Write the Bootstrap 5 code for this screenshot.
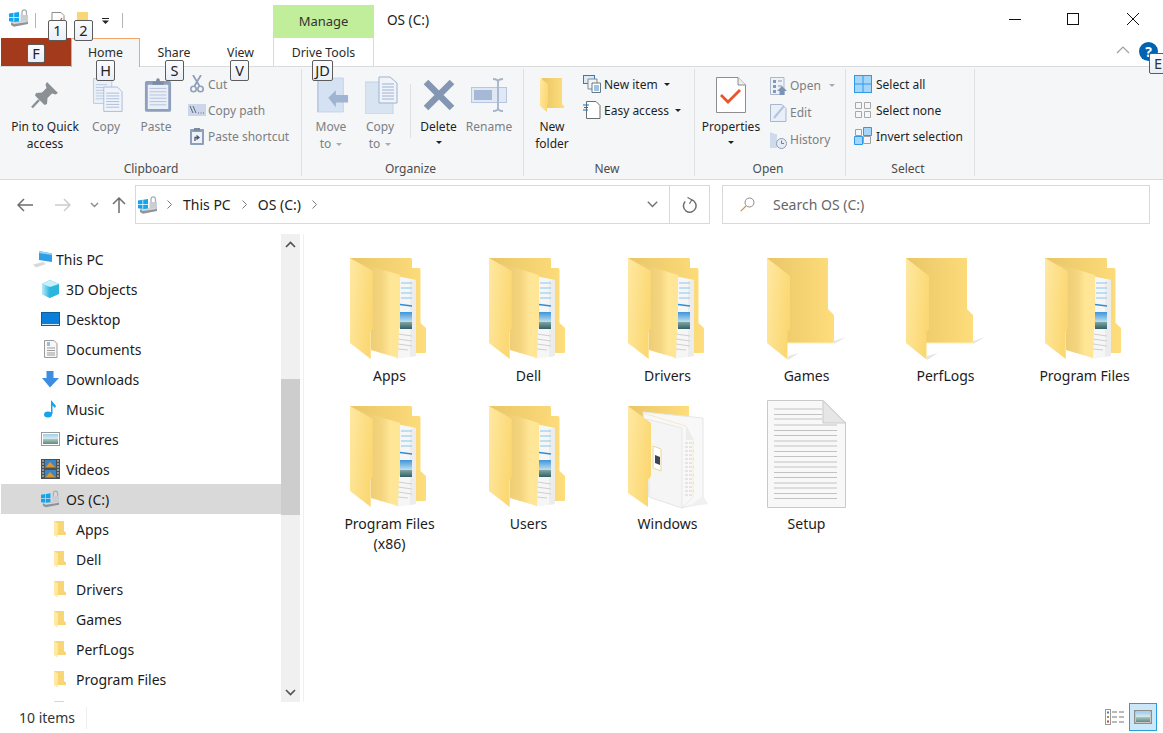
<!DOCTYPE html>
<html lang="en">
<head>
<meta charset="utf-8">
<title>OS (C:)</title>
<link href="https://cdn.jsdelivr.net/npm/bootstrap@5.3.0/dist/css/bootstrap.min.css" rel="stylesheet">
<style>
html,body{margin:0;height:100%;background:#fff;overflow:hidden}
body{font-family:"Noto Sans","Open Sans",sans-serif;font-size:14px;color:#1a1a1a}
.win{width:1163px;height:733px;position:relative;overflow:hidden;background:#fff}
svg{display:block;flex:none}
/* title */
.ttl{height:38px}
.qat{width:273px;padding:9px 0 0 9px}
.qsep{width:1px;height:15px;background:#b5b5b5;margin-top:4px}
.qs1{margin-left:6px}
.qi1{margin:3px 0 0 15px}
.qi2{margin:3px 0 0 12px}
.qi3{margin:9px 0 0 13px}
.qs2{margin-left:13px}
.mng{width:101px;height:33px;margin-top:5px;background:#c1ee9a;font-size:13px;color:#333}
.ttxt{padding-left:13px;font-size:13.6px;color:#222;height:38px;line-height:39px}
.wctl{width:58px;height:38px}
.wctl-last{width:61px}
/* tabs */
.tabs{height:29px;font-size:12.3px;color:#2b2b2b}
.tb{height:29px;line-height:29px;text-align:center;position:relative;z-index:1}
.tb-file{width:70px;margin-left:1px;height:28px;background:#a43a1c}
.tb-home{width:69px;background:#f5f6f7;border:1px solid #f3a56c;border-bottom:0;line-height:27px}
.tb-share{width:68px}
.tb-view{width:65px}
.tb-drive{width:101px;border-left:1px solid #dadbdc;border-right:1px solid #dadbdc;background:#fff;height:28px}
.hlp{width:19px;height:19px;border-radius:50%;background:#0063b1;color:#fff;font-size:14px;font-weight:700;line-height:20px;text-align:center;margin:4px 5px 0 9px}
/* ribbon */
.rbn{height:114px;margin-top:-1px;background:#f5f6f7;border-top:1px solid #dadbdc;border-bottom:1px solid #dadbdc;padding:2px 0 0 1px;font-size:12px;line-height:17px;color:#1f1f1f}
.grp{height:107px;border-right:1px solid #dfe0e2}
.g1{width:301px}
.g2{width:222px}
.g3{width:171px}
.g4{width:151px}
.g5{width:129px}
.g1 .rbody{padding-left:3px}
.g2 .rbody{padding-left:8px}
.g3 .rbody{padding-left:4px}
.g4 .rbody{padding-left:2px}
.g5 .rbody{padding-left:8px}
.rbody{height:91px;flex:none}
.rlbl{height:16px;line-height:16px;text-align:center;color:#4c4c4c;font-size:12px;margin-top:1px;flex:none}
.g2 .rlbl,.g3 .rlbl,.g4 .rlbl,.g5 .rlbl{padding-right:4px}
.bbtn{display:flex;flex-direction:column;align-items:center;text-align:center;padding-top:3px}
.bico{height:46px;display:flex;align-items:center;justify-content:center}
.shr{margin-left:3px}
.dim{color:#7c7f84}
.w82{width:82px}.w40{width:40px}.w60{width:60px}.w42{width:42px}.w56{width:56px}.w53{width:53px}.w48{width:48px}.w68{width:68px}
.vsep{width:1px;height:54px;background:#dfe0e2;margin:15px 1px 0 2px}
.scol{padding-top:2px}
.srow{height:26px;white-space:nowrap}
.scol-open{padding-top:3px}
.scol-open .srow{height:27px}
.sico{width:20px;display:flex;justify-content:center;margin-right:1px}
.ms-s1{margin-left:1px}.ms-s3{margin-left:3px}
.g3 .sico{margin-right:2px}
.g3 .scol{margin-left:6px}
.g3 .cr{margin-left:6px}
.cr{display:inline-block;width:0;height:0;border-left:3.5px solid transparent;border-right:3.5px solid transparent;border-top:3.5px solid #222;vertical-align:2px;margin-left:3px}
.cr-dim{border-top-color:#a9abae;margin-left:5px}
.cr-solo{display:block;margin:6px auto 0}
.g4 .sico{margin-right:2px}
/* address */
.adr{height:54px;padding-top:5px}
.nbtns{width:135px;height:39px;padding-left:5px}
.nb1{width:40px}.nb2{width:36px}.nb3{width:26px}.nb4{width:24px}
.abox{width:575px;height:39px;border:1px solid #d9d9d9;font-size:14px;color:#222;padding-left:2px}
.sbox{width:428px;height:39px;border:1px solid #d9d9d9;margin-left:12px;font-size:14px;color:#666;padding-left:17px}
.srch{margin-right:18px}
.refr{width:40px;height:37px;border-left:1px solid #d9d9d9}
.addd{width:34px}
.m1{margin:0 11px}
.m3{margin:0 11px 0 9px}
/* main */
.mn{height:473px}
.nvp{width:304px;height:468px;border-right:1px solid #f0f0f0}
.nvl{width:280px;margin-left:1px;padding-top:10px;height:468px;overflow:hidden;font-size:14px;color:#1c1c1c}
.nvr{height:30px;white-space:nowrap}
.l0{padding-left:31px}
.l1{padding-left:40px}
.l2{padding-left:52px}
.l0 svg{margin-right:2px}
.l1 svg{margin-right:6px}
.l2 svg{margin-right:9px}
.nv-sel{background:#d9d9d9}
.sbar{width:19px;height:468px;background:#f0f0f0;margin-left:0}
.sb-up,.sb-dn{height:20px}
.sb-mid{height:428px}
.sb-top{height:125px}
.sb-th{height:136px;background:#cdcdcd}
.fgrid{display:grid;grid-template-columns:repeat(6,139px);grid-auto-rows:148px;padding:17px 0 0 16px;font-size:14px;color:#1c1c1c}
.itm{text-align:center;line-height:20px}
.ibox{width:80px;height:112px;margin:0 auto 3px}
.ibox svg{overflow:visible}
/* status */
.stb{height:26px;font-size:14px;color:#333}
.sttx{width:87px;padding-left:19px;border-right:1px solid #eee;height:22px;line-height:21px}
.vw{width:28px;height:28px;margin-top:-4px}
.vw-on{background:#cce8f8;border:1px solid #26a0da;margin-right:6px}
/* key tips */
.kt{position:absolute;z-index:5;height:21px;background:linear-gradient(#fbfcfe,#e9eff8);border:1px solid #5c5c5c;border-radius:2px;font-size:14.5px;line-height:19px;text-align:center;color:#222}
.kt1{left:48px;top:20px;width:19px}
.kt2{left:74px;top:20px;width:19px}
.ktf{left:27px;top:44px;width:18px;height:19px;line-height:17px}
.kth{left:96px;top:60px;width:19px}
.kts{left:165px;top:60px;width:19px}
.ktv{left:230px;top:60px;width:19px}
.ktj{left:312px;top:60px;width:21px}
.kte{left:1149px;top:53px;width:20px;text-align:left;padding-left:4px;color:#333}
</style>
</head>
<body>
<svg width="0" height="0" class="position-absolute" aria-hidden="true">
<defs>
<linearGradient id="gF" x1="0" y1="0" x2="1" y2="0.4"><stop offset="0" stop-color="#ffe8a2"/><stop offset="1" stop-color="#fbd873"/></linearGradient>
<linearGradient id="gB" x1="0" y1="0" x2="1" y2="0"><stop offset="0" stop-color="#e9c566"/><stop offset="1" stop-color="#fedd7c"/></linearGradient>
<linearGradient id="gM" x1="0" y1="0" x2="1" y2="0"><stop offset="0.25" stop-color="#edcd75"/><stop offset="0.55" stop-color="#f5d680"/><stop offset="0.75" stop-color="#ffe596"/></linearGradient>
<linearGradient id="gS" x1="0" y1="0" x2="0" y2="1"><stop offset="0" stop-color="#3d95dd"/><stop offset="0.6" stop-color="#c3e1ee"/><stop offset="0.61" stop-color="#7ea29c"/><stop offset="1" stop-color="#31606b"/></linearGradient>
<linearGradient id="gP" x1="0" y1="0" x2="0" y2="1"><stop offset="0" stop-color="#9fd0ea"/><stop offset="0.5" stop-color="#d8ebf0"/><stop offset="0.55" stop-color="#a9c2b6"/><stop offset="1" stop-color="#5f8a84"/></linearGradient>
<linearGradient id="gC" x1="0" y1="0" x2="1" y2="0"><stop offset="0" stop-color="#bdeaf7"/><stop offset="1" stop-color="#25b4e0"/></linearGradient>

<symbol id="fdocs" viewBox="0 -6 80 112">
<path d="M0 1H61Q62 1 62 3V11H69Q70.500 11 70.500 13V66L76 71V95Q76 96 75 96H30Z" fill="url(#gB)"/>
<path d="M47 19L66 23V99L46 102Z" fill="#f6f6f6"/>
<path d="M66 23V99L60 100V24Z" fill="#ececec"/>
<path d="M51 26H62M51 31H62M51 36H62M51 41H62" stroke="#86c8ee" stroke-width="1"/>
<path d="M50 47.500L62 49" stroke="#2a8fd8" stroke-width="1.400"/>
<rect x="50" y="55" width="12" height="17" fill="url(#gS)"/>
<path d="M48 77L62 79M48 82L62 84M48 87L62 89M48 92L58 93" stroke="#cfcfcf" stroke-width="1"/>
<path d="M11 6L50 18V70L49 72L48 101L21 93V73L22 70V15Z" fill="url(#gM)"/>
<path d="M0 1L22.700 13.700V71L20.700 75V102L0 86Z" fill="url(#gF)"/>
</symbol>

<symbol id="fplain" viewBox="0 -6 80 112">
<path d="M67 84L79 80L67 87ZM21 99L32 96L21 103Z" fill="#e6e6e6"/>
<path d="M0 1H60.500Q61 1 61 2V52L67 58V85Q67 86 66 86H20Z" fill="url(#gB)"/>
<path d="M21 86H66.500V85" fill="none" stroke="#fff0b8" stroke-width="1"/>
<path d="M0 1L23 19V72L20.500 75V102.500L0 86Z" fill="url(#gF)"/>
</symbol>

<symbol id="fwin" viewBox="0 -6 80 112">
<path d="M0 1H61V22H0Z" fill="url(#gB)"/>
<path d="M15 7L75 13V97L54 103L21 92Z" fill="#f8f8f8" stroke="#e6e6e6" stroke-width="1"/>
<path d="M80 99L60 102L75 91Z" fill="#f0f0f0"/>
<path d="M15 8L58 21L65 35V92L54 103" fill="none" stroke="#f6ebc8" stroke-width="1"/>
<path d="M58 22L66 35H58Z" fill="#ececec"/>
<path d="M18 14L54 23V103L21 92V72L22 70Z" fill="#f5f5f5" stroke="#e8e8e8" stroke-width="1"/>
<path d="M57 38H66M57 42H65M57 46H66M57 50H64M57 54H66M57 58H65M57 62H66M57 66H64M57 70H66M57 74H65M57 78H66M57 82H64M57 86H66M57 90H65" stroke="#d2d2d2" stroke-width="1" stroke-dasharray="3 1"/>
<path d="M25 41L33 44V66L25 63Z" fill="#fff" stroke="#ecd79a" stroke-width="1"/>
<path d="M27 50L32 52V60L27 58Z" fill="#3b4656"/>
<path d="M0 1L23 18V71L20 75V102L0 88Z" fill="url(#gF)"/>
</symbol>

<symbol id="fdoc" viewBox="0 -6 80 112">
<path d="M0.500 -4.500H56L78.500 18V102.500H0.500Z" fill="#f8f8f8" stroke="#c9c9c9" stroke-width="1"/>
<path d="M56 -4.500L78.500 18H56Z" fill="#e6e6e6" stroke="#c9c9c9" stroke-width="1"/>
<path d="M7 4H55M7 9.500H55M7 14H55M7 20H70M7 25.500H70M7 30.500H70M7 36H70M7 41H70M7 46.500H70M7 51.500H70M7 57H70M7 62H70M7 67.500H70M7 72.500H70M7 78H70M7 83H70M7 88.500H70M7 93.500H70" stroke="#c2c2c2" stroke-width="1"/>
</symbol>

<symbol id="sfold" viewBox="0 0 14 18">
<path d="M1 1H11V11L13 12.500V15H4Z" fill="#f8d676"/>
<path d="M1 1L5 3.500V12L4.500 13V17.500L1 15Z" fill="#ffe8a2"/>
</symbol>

<symbol id="drv" viewBox="0 0 20 18">
<path d="M0 4.500L4.500 3.800V8H0ZM5.200 3.700L10 3V8H5.200ZM0 8.800H4.500V13L0 12.300ZM5.200 8.800H10V13.700L5.200 13Z" fill="#12a5ef"/>
<path d="M11.500 6H19V13H11.500Z" fill="#c9ced3"/>
<path d="M13 6V3.500Q13 0.800 15.300 0.800Q17.500 0.800 17.500 3.500V6" fill="none" stroke="#a9aeb3" stroke-width="1.300"/>
<path d="M2 13.500L16 12L19 13V15L5 17.800L2 16Z" fill="#8f9499"/>
<path d="M2 13.500L16 11.800L19 13L5 15Z" fill="#d6d9dc"/>
</symbol>
</defs>
</svg>

<div class="win d-flex flex-column">
  <div class="kt kt1">1</div><div class="kt kt2">2</div><div class="kt ktf">F</div><div class="kt kth">H</div><div class="kt kts">S</div><div class="kt ktv">V</div><div class="kt ktj">JD</div><div class="kt kte">E</div>

  <header class="ttl d-flex">
    <div class="qat d-flex align-items-start">
      <svg width="20" height="18"><use href="#drv"/></svg>
      <div class="qsep qs1"></div>
      <svg class="qi1" width="14" height="14" viewBox="0 0 14 14"><path d="M1 .5H10L13 3.500V14H1Z" fill="#fff" stroke="#8c8c8c"/><path d="M6 9L8 11L11 6" fill="none" stroke="#e0502a" stroke-width="1.300"/></svg>
      <svg class="qi2" width="12" height="12" viewBox="0 0 12 12"><path d="M0 0H11V12H0Z" fill="#f8d676"/></svg>
      <svg class="qi3" width="7" height="6" viewBox="0 0 7 6"><path d="M0 .5H7" stroke="#222"/><path d="M0 2.500H7L3.500 6Z" fill="#222"/></svg>
      <div class="qsep qs2"></div>
    </div>
    <div class="mng d-flex align-items-center justify-content-center">Manage</div>
    <div class="ttxt">OS (C:)</div>
    <div class="ms-auto d-flex">
      <div class="wctl d-flex align-items-center justify-content-center"><svg width="12" height="12" viewBox="0 0 12 12"><path d="M0 6.500H12" stroke="#111"/></svg></div>
      <div class="wctl d-flex align-items-center justify-content-center"><svg width="12" height="12" viewBox="0 0 12 12"><rect x=".5" y=".5" width="11" height="11" fill="none" stroke="#111"/></svg></div>
      <div class="wctl wctl-last d-flex align-items-center justify-content-center"><svg width="12" height="12" viewBox="0 0 12 12"><path d="M0 0L12 12M12 0L0 12" stroke="#111"/></svg></div>
    </div>
  </header>

  <nav class="tabs d-flex">
    <div class="tb tb-file"></div>
    <div class="tb tb-home">Home</div>
    <div class="tb tb-share">Share</div>
    <div class="tb tb-view">View</div>
    <div class="tb tb-drive">Drive Tools</div>
    <div class="ms-auto d-flex align-items-start">
      <svg class="mt-2" width="14" height="8" viewBox="0 0 14 8"><path d="M1 7L7 1L13 7" fill="none" stroke="#a0a0a0" stroke-width="1.200"/></svg>
      <div class="hlp">?</div>
    </div>
  </nav>

  <section class="rbn d-flex">
    <div class="grp g1 d-flex flex-column">
      <div class="rbody d-flex">
        <div class="bbtn w82"><div class="bico"><svg width="30" height="30" viewBox="0 0 30 30"><path d="M17 2L28 13L25.500 14.500L22 13.500L17.500 18L17 24L14.500 25L5 15.500L6 13L12 12.500L16.500 8L15.500 4.500Z" fill="#8b9094"/><path d="M9 20L2 27.500" stroke="#8b9094" stroke-width="2.500"/></svg></div><div>Pin to Quick<br>access</div></div>
        <div class="bbtn w40 dim"><div class="bico"><svg class="shr" width="30" height="38" viewBox="0 0 32 40"><path d="M.5 2.500H17L20 5.500V29H.5Z" fill="#eaf0f9" stroke="#b9c9df"/><path d="M3 9H15M3 12H15M3 15H12M3 18H12M3 21H12M3 24H12" stroke="#b9c9df"/><path d="M11.500 11.500H26L31 16.500V37.500H11.500Z" fill="#f0f4fa" stroke="#a8bcd7"/><path d="M14 18H28M14 21H28M14 24H28M14 27H28M14 30H28M14 33H28" stroke="#a8bcd7"/></svg></div><div>Copy</div></div>
        <div class="bbtn w60 dim"><div class="bico"><svg class="shr" width="28" height="38" viewBox="0 0 30 38"><rect x="1" y="4" width="28" height="33" rx="2" fill="#8d9fbd"/><rect x="4" y="8" width="22" height="26" fill="#e9eef7"/><path d="M6 12H24M6 15.500H24M6 19H24M6 22.500H24M6 26H24M6 29.500H24" stroke="#b3c2db"/><path d="M9 8V4.500H13Q13 1 15 1Q17 1 17 4.500H21V8Z" fill="#7c8ba3"/></svg></div><div>Paste</div></div>
        <div class="scol ms-s1">
          <div class="srow d-flex align-items-center dim"><div class="sico"><svg width="14" height="18" viewBox="0 0 14 18"><path d="M3 0L9.500 11M11 0L4.500 11" stroke="#8fa0ba" stroke-width="1.800"/><circle cx="3.500" cy="14" r="2.700" fill="none" stroke="#8fa0ba" stroke-width="1.600"/><circle cx="10.500" cy="14" r="2.700" fill="none" stroke="#8fa0ba" stroke-width="1.600"/></svg></div>Cut</div>
          <div class="srow d-flex align-items-center dim"><div class="sico"><svg width="18" height="12" viewBox="0 0 18 12"><rect width="18" height="12" fill="#cbd6e8"/><path d="M2 2L5 9M5 2L8 9M10 9H11M12.500 9H13.500M15 9H16" stroke="#5a6a85"/></svg></div>Copy path</div>
          <div class="srow d-flex align-items-center dim"><div class="sico"><svg width="14" height="18" viewBox="0 0 14 18"><rect y="2" width="14" height="16" rx="1" fill="#8d9fbd"/><rect x="2" y="5" width="10" height="11" fill="#eef2f8"/><path d="M4 1H10V4H4Z" fill="#7c8ba3"/><path d="M5 14V10.500H8M6.500 8.500L9 10.500L6.500 12.500" fill="none" stroke="#45587a" stroke-width="1.300"/></svg></div>Paste shortcut</div>
        </div>
      </div>
      <div class="rlbl">Clipboard</div>
    </div>

    <div class="grp g2 d-flex flex-column">
      <div class="rbody d-flex">
        <div class="bbtn w42 dim"><div class="bico"><svg class="shr" width="32" height="36" viewBox="0 0 34 36"><path d="M0 0H28V36H0Z" fill="#d5e2f3" stroke="#c2d2e7"/><path d="M0 0H2V36H0Z" fill="#bccde4"/><path d="M12 21L20 13V18H33V26H20V31Z" fill="#9fb4d0"/></svg></div><div>Move<br>to<span class="cr cr-dim"></span></div></div>
        <div class="bbtn w56 dim"><div class="bico"><svg class="shr" width="33" height="38" viewBox="0 0 33 38"><path d="M0 6H28V38H0Z" fill="#d9e4f3" stroke="#c2d2e7"/><path d="M14 1H25L32 7V27H14Z" fill="#f0f4fa" stroke="#9db2ce"/><path d="M17 8H29M17 11H29M17 14H29M17 17H29M17 20H29M17 23H29" stroke="#9db2ce"/></svg></div><div>Copy<br>to<span class="cr cr-dim"></span></div></div>
        <div class="vsep"></div>
        <div class="bbtn w53"><div class="bico"><svg width="32" height="32" viewBox="0 0 32 32"><path d="M3 3L29 29M29 3L3 29" stroke="#8497b2" stroke-width="6.500"/></svg></div><div>Delete<span class="cr cr-solo"></span></div></div>
        <div class="bbtn w48 dim"><div class="bico"><svg width="36" height="34" viewBox="0 0 36 34"><rect x=".5" y="9.500" width="35" height="15" fill="#e0e8f5" stroke="#b5c6de"/><rect x="3" y="12" width="18" height="10" fill="#a5b8d5"/><path d="M22 1Q27 1 27 4V30Q27 33 32 33M32 1Q27 1 27 4M27 30Q27 33 22 33" fill="none" stroke="#a5b4c9" stroke-width="1.800"/></svg></div><div>Rename</div></div>
      </div>
      <div class="rlbl">Organize</div>
    </div>

    <div class="grp g3 d-flex flex-column">
      <div class="rbody d-flex">
        <div class="bbtn w48"><div class="bico"><svg width="24" height="34" viewBox="0 0 24 34"><path d="M2 0H22V26L24 28V30H6Z" fill="url(#gB)"/><path d="M0 0L8 6V25L7 26V34L0 28Z" fill="url(#gF)"/></svg></div><div>New<br>folder</div></div>
        <div class="scol">
          <div class="srow d-flex align-items-center"><div class="sico"><svg width="18" height="18" viewBox="0 0 18 18"><rect x=".5" y=".5" width="11" height="8" fill="#dbeaf7" stroke="#2b7fc0"/><path d="M5 4H14V14H5Z" fill="#f4f4f4" stroke="#7f8a96"/><path d="M9 8H17.500V17.500H9Z" fill="#fff" stroke="#6b7784"/><path d="M11 11H16M11 13H16M11 15H16" stroke="#3c87c7"/></svg></div>New item<span class="cr"></span></div>
          <div class="srow d-flex align-items-center"><div class="sico"><svg width="18" height="18" viewBox="0 0 18 18"><path d="M3.500 .5H13L17 4.500V17.500H3.500Z" fill="#fff" stroke="#6d6d6d"/><path d="M0 4H6M1 6.500H5M0 9H5" stroke="#1172be" stroke-width="1"/></svg></div>Easy access<span class="cr"></span></div>
        </div>
      </div>
      <div class="rlbl">New</div>
    </div>

    <div class="grp g4 d-flex flex-column">
      <div class="rbody d-flex">
        <div class="bbtn w68"><div class="bico"><svg width="30" height="36" viewBox="0 0 30 36"><path d="M.5 .5H22L29.500 8V35.500H.5Z" fill="#fff" stroke="#8e8e8e"/><path d="M22 .5V8H29.500" fill="#eee" stroke="#8e8e8e"/><path d="M5 18L12 25L24 13" fill="none" stroke="#e4572a" stroke-width="2.800"/></svg></div><div>Properties<span class="cr cr-solo"></span></div></div>
        <div class="scol scol-open ms-s3">
          <div class="srow d-flex align-items-center dim"><div class="sico"><svg width="17" height="18" viewBox="0 0 17 18"><path d="M.5 .5H14V17.500H.5Z" fill="#eef2f8" stroke="#a9b8ce"/><path d="M3 3H6V6H3ZM3 8H6V11H3ZM3 13H6V16H3Z" fill="#8597b1"/><path d="M8 4H12M8 9H12" stroke="#8597b1"/><path d="M12 9L17 14H14.500V18H9.500V14H7Z" fill="#7d93b3"/></svg></div>Open<span class="cr cr-dim ms-2"></span></div>
          <div class="srow d-flex align-items-center dim"><div class="sico"><svg width="17" height="18" viewBox="0 0 17 18"><path d="M.5 .5H12L16 4.500V17.500H.5Z" fill="#e9eff8" stroke="#a9b8ce"/><path d="M4 14L14 2" stroke="#b4c4da" stroke-width="2"/></svg></div>Edit</div>
          <div class="srow d-flex align-items-center dim"><div class="sico"><svg width="17" height="18" viewBox="0 0 17 18"><path d="M0 1L5 3H7V17H0Z" fill="#cfdbeb"/><circle cx="11.500" cy="12.500" r="5" fill="#e6ecf5" stroke="#8d9cb0"/><path d="M11.500 9.500V12.500H14" fill="none" stroke="#6e7e95"/></svg></div>History</div>
        </div>
      </div>
      <div class="rlbl">Open</div>
    </div>

    <div class="grp g5 d-flex flex-column">
      <div class="rbody">
        <div class="scol">
          <div class="srow d-flex align-items-center"><svg class="me-1" width="18" height="18" viewBox="0 0 18 18"><rect x=".5" y=".5" width="17" height="17" fill="#a5d5f8" stroke="#2f9ae8"/><path d="M9 0V18M0 9H18" stroke="#2f9ae8" stroke-width="1"/></svg>Select all</div>
          <div class="srow d-flex align-items-center"><svg class="me-1" width="18" height="18" viewBox="0 0 18 18"><path d="M1.500 1.500H7.500V7.500H1.500ZM10.500 1.500H16.500V7.500H10.500ZM1.500 10.500H7.500V16.500H1.500ZM10.500 10.500H16.500V16.500H10.500Z" fill="none" stroke="#a8a8a8"/></svg>Select none</div>
          <div class="srow d-flex align-items-center"><svg class="me-1" width="18" height="18" viewBox="0 0 18 18"><path d="M1.500 2.500H7.500V8.500H1.500ZM9.500 9.500H16.500V16.500H9.500Z" fill="none" stroke="#a0a0a0"/><path d="M9.500 .5H17.500V8.500H9.500ZM.5 9.500H8.500V17.500H.5Z" fill="#a5d5f8" stroke="#2f9ae8"/></svg>Invert selection</div>
        </div>
      </div>
      <div class="rlbl">Select</div>
    </div>
  </section>

  <div class="adr d-flex">
    <div class="nbtns d-flex align-items-center">
      <div class="nb1 d-flex justify-content-center"><svg width="16" height="14" viewBox="0 0 16 14"><path d="M16 7H1M7 1L1 7L7 13" fill="none" stroke="#6e6e6e" stroke-width="1.500"/></svg></div>
      <div class="nb2 d-flex justify-content-center"><svg width="16" height="14" viewBox="0 0 16 14"><path d="M0 7H15M9 1L15 7L9 13" fill="none" stroke="#cdcdcd" stroke-width="1.500"/></svg></div>
      <div class="nb3 d-flex justify-content-center"><svg width="9" height="6" viewBox="0 0 9 6"><path d="M1 1L4.500 4.500L8 1" fill="none" stroke="#8a8a8a" stroke-width="1.400"/></svg></div>
      <div class="nb4 d-flex justify-content-center"><svg width="14" height="16" viewBox="0 0 14 16"><path d="M7 16V1M1 7L7 1L13 7" fill="none" stroke="#6e6e6e" stroke-width="1.500"/></svg></div>
    </div>
    <div class="abox d-flex align-items-center">
      <svg width="20" height="18"><use href="#drv"/></svg>
      <svg class="m3" width="5" height="9" viewBox="0 0 5 9"><path d="M.5 .5L4.500 4.500L.5 8.500" fill="none" stroke="#7a7a7a"/></svg>
      <span>This PC</span>
      <svg class="m1" width="5" height="9" viewBox="0 0 5 9"><path d="M.5 .5L4.500 4.500L.5 8.500" fill="none" stroke="#7a7a7a"/></svg>
      <span>OS (C:)</span>
      <svg class="m1" width="5" height="9" viewBox="0 0 5 9"><path d="M.5 .5L4.500 4.500L.5 8.500" fill="none" stroke="#7a7a7a"/></svg>
      <div class="ms-auto d-flex align-items-center">
        <div class="addd d-flex justify-content-center"><svg width="11" height="7" viewBox="0 0 11 7"><path d="M.8 .8L5.500 5.500L10.200 .8" fill="none" stroke="#6e6e6e" stroke-width="1.300"/></svg></div>
        <div class="refr d-flex align-items-center justify-content-center"><svg width="15" height="16" viewBox="0 0 15 16"><path d="M9.500 2.800A6.300 6.300 0 1 1 3.200 4.500" fill="none" stroke="#6e6e6e" stroke-width="1.500"/><path d="M5.500 .5L9.800 2.800L7.500 6.800" fill="none" stroke="#6e6e6e" stroke-width="1.200"/></svg></div>
      </div>
    </div>
    <div class="sbox d-flex align-items-center">
      <svg class="srch" width="15" height="15" viewBox="0 0 15 15"><circle cx="9.500" cy="5.500" r="4.500" fill="none" stroke="#8a8a8a"/><path d="M6 9L.8 14.200" stroke="#c7924a" stroke-width="1.200"/></svg>
      <span>Search OS (C:)</span>
    </div>
  </div>

  <main class="mn d-flex">
    <aside class="nvp d-flex align-items-start">
      <ul class="nvl list-unstyled mb-0">
        <li class="nvr l0 d-flex align-items-center"><svg width="22" height="18" viewBox="0 0 22 18"><path d="M7 1L20 3.500V12L7 10Z" fill="#2d9fe6"/><path d="M7 1L20 3.500V5L7 3Z" fill="#9ad4f5"/><path d="M1 14.500L11 12L14 14L4 17.500Z" fill="#d7d9db"/></svg>This PC</li>
        <li class="nvr l1 d-flex align-items-center"><svg width="19" height="18" viewBox="0 0 19 18"><path d="M1 4L9 0L18 4V14L9 18L1 14Z" fill="#2cb6df"/><path d="M1 4L9 7V18L1 14Z" fill="url(#gC)"/><path d="M1 4L9 0L18 4L9 7Z" fill="#c8f0fa"/></svg>3D Objects</li>
        <li class="nvr l1 d-flex align-items-center"><svg width="19" height="14" viewBox="0 0 19 14"><rect x=".5" y=".5" width="18" height="13" fill="#0a7ed8" stroke="#0a5f9e"/><path d="M1 12.500H18" stroke="#d7ecfa"/></svg>Desktop</li>
        <li class="nvr l1 d-flex align-items-center"><svg width="19" height="18" viewBox="0 0 19 18"><path d="M3.500 .5H13L16 3.500V17.500H3.500Z" fill="#f7f7f7" stroke="#9b9b9b"/><path d="M6 3H9M6 5H9" stroke="#2f86c8"/><path d="M6 8H14M6 10.500H14M6 13H14M6 15H14" stroke="#9b9b9b"/></svg>Documents</li>
        <li class="nvr l1 d-flex align-items-center"><svg width="19" height="17" viewBox="0 0 19 17"><path d="M5.500 0H12.500V7H18L9 16.500L1 7H5.500Z" fill="#3d8ee0"/></svg>Downloads</li>
        <li class="nvr l1 d-flex align-items-center"><svg width="19" height="18" viewBox="0 0 19 18"><ellipse cx="7" cy="14.500" rx="4" ry="3" fill="#13a3ef"/><path d="M10 14V0L15 6L14 8L11.500 5.500V14Z" fill="#13a3ef"/></svg>Music</li>
        <li class="nvr l1 d-flex align-items-center"><svg width="19" height="14" viewBox="0 0 19 14"><rect x=".5" y=".5" width="18" height="13" fill="#fff" stroke="#9a9a9a"/><rect x="2" y="2" width="15" height="10" fill="url(#gP)"/></svg>Pictures</li>
        <li class="nvr l1 d-flex align-items-center"><svg width="19" height="20" viewBox="0 0 19 20"><rect width="19" height="20" fill="#4a4f52"/><rect x="4" y="1" width="11" height="8" fill="#3a87c7"/><rect x="4" y="11" width="11" height="8" fill="#3a87c7"/><path d="M5 8L9 3L14 8ZM5 18L9 13L14 18Z" fill="#e0962e"/><path d="M1 2H3M1 5H3M1 8H3M1 11H3M1 14H3M1 17H3M16 2H18M16 5H18M16 8H18M16 11H18M16 14H18M16 17H18" stroke="#dedede"/></svg>Videos</li>
        <li class="nvr l1 nv-sel d-flex align-items-center"><svg width="19" height="18"><use href="#drv"/></svg>OS (C:)</li>
        <li class="nvr l2 d-flex align-items-center"><svg width="14" height="18"><use href="#sfold"/></svg>Apps</li>
        <li class="nvr l2 d-flex align-items-center"><svg width="14" height="18"><use href="#sfold"/></svg>Dell</li>
        <li class="nvr l2 d-flex align-items-center"><svg width="14" height="18"><use href="#sfold"/></svg>Drivers</li>
        <li class="nvr l2 d-flex align-items-center"><svg width="14" height="18"><use href="#sfold"/></svg>Games</li>
        <li class="nvr l2 d-flex align-items-center"><svg width="14" height="18"><use href="#sfold"/></svg>PerfLogs</li>
        <li class="nvr l2 d-flex align-items-center"><svg width="14" height="18"><use href="#sfold"/></svg>Program Files</li>
        <li class="nvr l2 d-flex align-items-center"><svg width="14" height="18"><use href="#sfold"/></svg></li>
      </ul>
      <div class="sbar d-flex flex-column">
        <div class="sb-up d-flex align-items-center justify-content-center"><svg width="11" height="7" viewBox="0 0 11 7"><path d="M1 6L5.500 1.500L10 6" fill="none" stroke="#505050" stroke-width="1.600"/></svg></div>
        <div class="sb-mid"><div class="sb-top"></div><div class="sb-th"></div></div>
        <div class="sb-dn d-flex align-items-center justify-content-center"><svg width="11" height="7" viewBox="0 0 11 7"><path d="M1 1L5.500 5.500L10 1" fill="none" stroke="#505050" stroke-width="1.600"/></svg></div>
      </div>
    </aside>

    <section class="fgrid">
      <div class="itm"><svg class="ibox" width="80" height="112"><use href="#fdocs"/></svg>Apps</div>
      <div class="itm"><svg class="ibox" width="80" height="112"><use href="#fdocs"/></svg>Dell</div>
      <div class="itm"><svg class="ibox" width="80" height="112"><use href="#fdocs"/></svg>Drivers</div>
      <div class="itm"><svg class="ibox" width="80" height="112"><use href="#fplain"/></svg>Games</div>
      <div class="itm"><svg class="ibox" width="80" height="112"><use href="#fplain"/></svg>PerfLogs</div>
      <div class="itm"><svg class="ibox" width="80" height="112"><use href="#fdocs"/></svg>Program Files</div>
      <div class="itm"><svg class="ibox" width="80" height="112"><use href="#fdocs"/></svg>Program Files<br>(x86)</div>
      <div class="itm"><svg class="ibox" width="80" height="112"><use href="#fdocs"/></svg>Users</div>
      <div class="itm"><svg class="ibox" width="80" height="112"><use href="#fwin"/></svg>Windows</div>
      <div class="itm"><svg class="ibox" width="80" height="112"><use href="#fdoc"/></svg>Setup</div>
    </section>
  </main>

  <footer class="stb d-flex align-items-start">
    <div class="sttx">10 items</div>
    <div class="ms-auto d-flex align-items-start">
      <div class="vw d-flex align-items-center justify-content-center"><svg width="20" height="16" viewBox="0 0 20 16"><rect x=".5" y=".5" width="5" height="15" fill="#fff" stroke="#9a9a9a"/><path d="M2 2.500H4V4.500H2Z" fill="#3a87c7"/><path d="M2 7H4V9H2Z" fill="#b58a2e"/><path d="M2 11.500H4V13.500H2Z" fill="#c04a2a"/><path d="M7 3H12M14 3H19M7 8H12M14 8H19M7 13H12M14 13H19" stroke="#777"/></svg></div>
      <div class="vw vw-on d-flex align-items-center justify-content-center"><svg width="18" height="14" viewBox="0 0 18 14"><rect x=".75" y=".75" width="16.500" height="12.500" fill="#fff" stroke="#8e8e8e" stroke-width="1.500"/><rect x="2" y="2" width="14" height="10" fill="url(#gP)"/></svg></div>
    </div>
  </footer>
</div>
<script src="https://cdn.jsdelivr.net/npm/bootstrap@5.3.0/dist/js/bootstrap.bundle.min.js"></script>
</body>
</html>
